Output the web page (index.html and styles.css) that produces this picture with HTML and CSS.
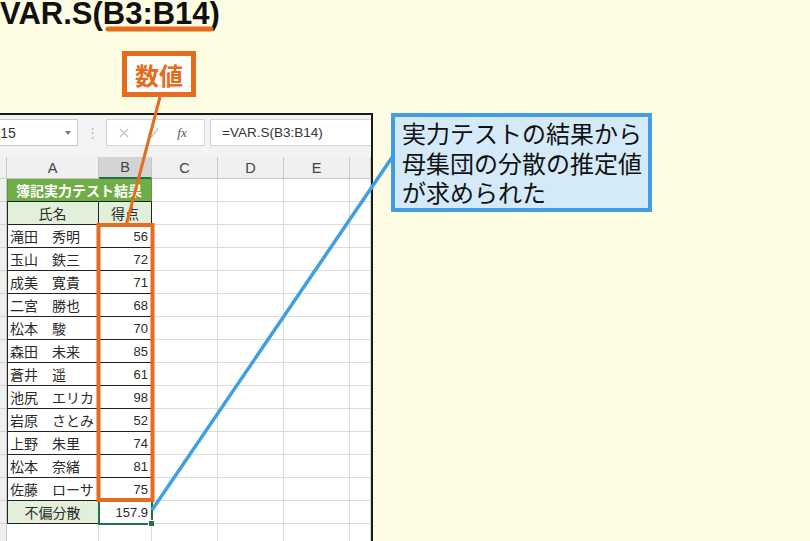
FILE: index.html
```html
<!DOCTYPE html>
<html lang="ja">
  <head>
    <meta charset="UTF-8">
    <title>VAR.S関数</title>
    <link rel="stylesheet" href="styles.css">
  </head>
  <body>
    <h1 class="formula-title">VAR.S(B3:B14)</h1>

    <div class="sheet">
      <div class="formula-bar">
        <div class="name-box">B15<span class="caret"></span></div>
        <span class="grip">⋮</span>
        <div class="fx-buttons">
          <svg class="btn" width="14" height="14" viewBox="0 0 14 14"><path d="M3 3L11 11M11 3L3 11" /></svg>
          <svg class="btn" width="14" height="14" viewBox="0 0 14 14"><path d="M2 7.5L5.5 11L12 2.5" /></svg>
          <span class="fx">fx</span>
        </div>
        <div class="formula-input">=VAR.S(B3:B14)</div>
      </div>

      <div class="row head">
        <div class="rh"></div><div class="c">A</div><div class="c sel">B</div><div class="c">C</div><div class="c">D</div><div class="c">E</div><div class="c"></div>
      </div>
      <div class="row">
        <div class="rh"></div><div class="c title">簿記実力テスト結果</div><div class="c"></div><div class="c"></div><div class="c"></div><div class="c"></div>
      </div>
      <div class="row">
        <div class="rh"></div><div class="c box edge label">氏名</div><div class="c box label">得点</div><div class="c"></div><div class="c"></div><div class="c"></div><div class="c"></div>
      </div>
      <div class="row">
        <div class="rh"></div><div class="c box edge name">滝田　秀明</div><div class="c box num">56</div><div class="c"></div><div class="c"></div><div class="c"></div><div class="c"></div>
      </div>
      <div class="row">
        <div class="rh"></div><div class="c box edge name">玉山　鉄三</div><div class="c box num">72</div><div class="c"></div><div class="c"></div><div class="c"></div><div class="c"></div>
      </div>
      <div class="row">
        <div class="rh"></div><div class="c box edge name">成美　寛貴</div><div class="c box num">71</div><div class="c"></div><div class="c"></div><div class="c"></div><div class="c"></div>
      </div>
      <div class="row">
        <div class="rh"></div><div class="c box edge name">二宮　勝也</div><div class="c box num">68</div><div class="c"></div><div class="c"></div><div class="c"></div><div class="c"></div>
      </div>
      <div class="row">
        <div class="rh"></div><div class="c box edge name">松本　駿</div><div class="c box num">70</div><div class="c"></div><div class="c"></div><div class="c"></div><div class="c"></div>
      </div>
      <div class="row">
        <div class="rh"></div><div class="c box edge name">森田　未来</div><div class="c box num">85</div><div class="c"></div><div class="c"></div><div class="c"></div><div class="c"></div>
      </div>
      <div class="row">
        <div class="rh"></div><div class="c box edge name">蒼井　遥</div><div class="c box num">61</div><div class="c"></div><div class="c"></div><div class="c"></div><div class="c"></div>
      </div>
      <div class="row">
        <div class="rh"></div><div class="c box edge name">池尻　エリカ</div><div class="c box num">98</div><div class="c"></div><div class="c"></div><div class="c"></div><div class="c"></div>
      </div>
      <div class="row">
        <div class="rh"></div><div class="c box edge name">岩原　さとみ</div><div class="c box num">52</div><div class="c"></div><div class="c"></div><div class="c"></div><div class="c"></div>
      </div>
      <div class="row">
        <div class="rh"></div><div class="c box edge name">上野　朱里</div><div class="c box num">74</div><div class="c"></div><div class="c"></div><div class="c"></div><div class="c"></div>
      </div>
      <div class="row">
        <div class="rh"></div><div class="c box edge name">松本　奈緒</div><div class="c box num">81</div><div class="c"></div><div class="c"></div><div class="c"></div><div class="c"></div>
      </div>
      <div class="row">
        <div class="rh"></div><div class="c box edge name">佐藤　ローサ</div><div class="c box num">75</div><div class="c"></div><div class="c"></div><div class="c"></div><div class="c"></div>
      </div>
      <div class="row">
        <div class="rh"></div><div class="c box edge label">不偏分散</div><div class="c box num active">157.9</div><div class="c"></div><div class="c"></div><div class="c"></div><div class="c"></div>
      </div>
      <div class="row">
        <div class="rh"></div><div class="c"></div><div class="c"></div><div class="c"></div><div class="c"></div><div class="c"></div><div class="c"></div>
      </div>
    </div>

    <!-- leader lines and highlight frames -->
    <svg class="marks" width="810" height="541" viewBox="0 0 810 541">
      <line class="orange" x1="108" y1="29" x2="211" y2="29" stroke-width="5" stroke-linecap="round" />
      <line class="orange" x1="160" y1="97" x2="126" y2="226" stroke-width="3" />
      <rect class="orange" x="98.5" y="225" width="54" height="275" fill="none" stroke-width="4" />
      <line class="blue" x1="152" y1="510" x2="393" y2="156" stroke-width="3.5" />
    </svg>

    <div class="tag">数値</div>

    <div class="note">実力テストの結果から<br>母集団の分散の推定値<br>が求められた</div>
  </body>
</html>
```

FILE: styles.css
```css
body {
  margin: 0;
  width: 810px;
  height: 541px;
  overflow: hidden;
  position: relative;
  background-color: #fefce3;
  font-family: 'Liberation Sans', Arial, sans-serif;
}

.formula-title {
  margin: 0;
  height: 27px;
  font-size: 31px;
  line-height: 27px;
  font-weight: bold;
  color: #111;
  white-space: nowrap;
}

/* spreadsheet window */
.sheet {
  margin: 86px 0 0 -30px;
  width: 403px;
  box-sizing: border-box;
  border: 2px solid #1b1b1b;
  border-bottom: none;
  background-color: #fff;
}

.formula-bar {
  display: flex;
  align-items: flex-start;
  height: 42px;
  box-sizing: border-box;
  padding-top: 4px;
  background-color: #f3f3f3;
}

.name-box {
  display: flex;
  align-items: center;
  margin-left: 14px;
  width: 92px;
  height: 27px;
  box-sizing: border-box;
  padding-left: 4px;
  border: 1px solid #c9c9c9;
  background-color: #fff;
  font-size: 14px;
  color: #333;
}

.caret {
  margin-left: auto;
  margin-right: 6px;
  border-left: 3px solid transparent;
  border-right: 3px solid transparent;
  border-top: 4px solid #777;
}

.grip {
  width: 28px;
  text-align: center;
  line-height: 27px;
  font-size: 13px;
  color: #bbb;
}

.fx-buttons {
  display: flex;
  align-items: center;
  gap: 15px;
  width: 99px;
  height: 27px;
  box-sizing: border-box;
  padding-left: 10px;
  border: 1px solid #d6d6d6;
  background-color: #fff;
}

.fx-buttons .btn {
  fill: none;
  stroke: #c4c4c4;
  stroke-width: 1.3;
}

.fx-buttons .fx {
  width: 14px;
  text-align: center;
  font-family: 'Liberation Serif', serif;
  font-style: italic;
  font-size: 13px;
  color: #555;
}

.formula-input {
  flex: 1;
  margin-left: 5px;
  height: 27px;
  box-sizing: border-box;
  padding-left: 11px;
  border: 1px solid #d6d6d6;
  border-right: none;
  background-color: #fff;
  line-height: 25px;
  font-size: 13.5px;
  color: #333;
}

/* cell grid */
.row {
  display: grid;
  grid-template-columns: 35px 92px 53px 66px 66px 66px 1fr;
  height: 23px;
}

.row.head {
  height: 22px;
}

.rh {
  box-sizing: border-box;
  border-right: 1px solid #c8c8c8;
  border-bottom: 1px solid #d4d4d4;
  background-color: #f0f0f0;
}

.c {
  display: flex;
  align-items: center;
  box-sizing: border-box;
  border-right: 1px solid #dcdcdc;
  border-bottom: 1px solid #dcdcdc;
  white-space: nowrap;
  font-family: 'Noto Sans CJK JP', sans-serif;
  font-size: 14px;
  color: #2a2a2a;
}

.head .c {
  justify-content: center;
  border-right-color: #c8c8c8;
  border-bottom-color: #c8c8c8;
  background-color: #f0f0f0;
  font-family: 'Liberation Sans', Arial, sans-serif;
  font-size: 14.5px;
  color: #444;
}

.head .c.sel {
  background-color: #d4d4d4;
  border-bottom: 2px solid #217346;
}

.title {
  grid-column: span 2;
  justify-content: center;
  background-color: #70ad47;
  border-right-color: #5c9a38;
  border-bottom-color: #222;
  box-shadow: inset 1px 0 0 #5c9a38;
  font-weight: bold;
  color: #fff;
}

.box {
  border-right-color: #222;
  border-bottom-color: #222;
}

.edge {
  box-shadow: inset 1px 0 0 #222;
}

.label {
  justify-content: center;
  background-color: #e2efda;
}

.name {
  padding-left: 3px;
}

.num {
  justify-content: flex-end;
  padding-right: 3px;
  font-family: 'Liberation Sans', Arial, sans-serif;
  font-size: 13px;
}

.active {
  position: relative;
  outline: 2px solid #217346;
  outline-offset: -1px;
}

.active::after {
  content: '';
  position: absolute;
  right: -4px;
  bottom: -4px;
  width: 5px;
  height: 5px;
  border: 1px solid #fff;
  background-color: #217346;
}

/* annotations */
.marks {
  position: absolute;
  left: 0;
  top: 0;
  pointer-events: none;
}

.marks .orange {
  stroke: #e36c1f;
}

.marks .blue {
  stroke: #3f9fe2;
}

.tag {
  position: absolute;
  left: 122px;
  top: 51px;
  width: 74px;
  height: 46px;
  box-sizing: border-box;
  display: flex;
  align-items: center;
  justify-content: center;
  border: 5px solid #e36c1f;
  background-color: #fff;
  font-family: 'Noto Sans CJK JP', sans-serif;
  font-size: 24px;
  font-weight: bold;
  color: #e36c1f;
}

.note {
  position: absolute;
  left: 391px;
  top: 113px;
  width: 261px;
  height: 99px;
  box-sizing: border-box;
  padding: 1px 0 0 7px;
  border: 4px solid #3f9fe2;
  background-color: #d5eaf9;
  font-family: 'Noto Sans CJK JP', sans-serif;
  font-size: 24px;
  line-height: 29.5px;
  color: #111;
  white-space: nowrap;
}
```
